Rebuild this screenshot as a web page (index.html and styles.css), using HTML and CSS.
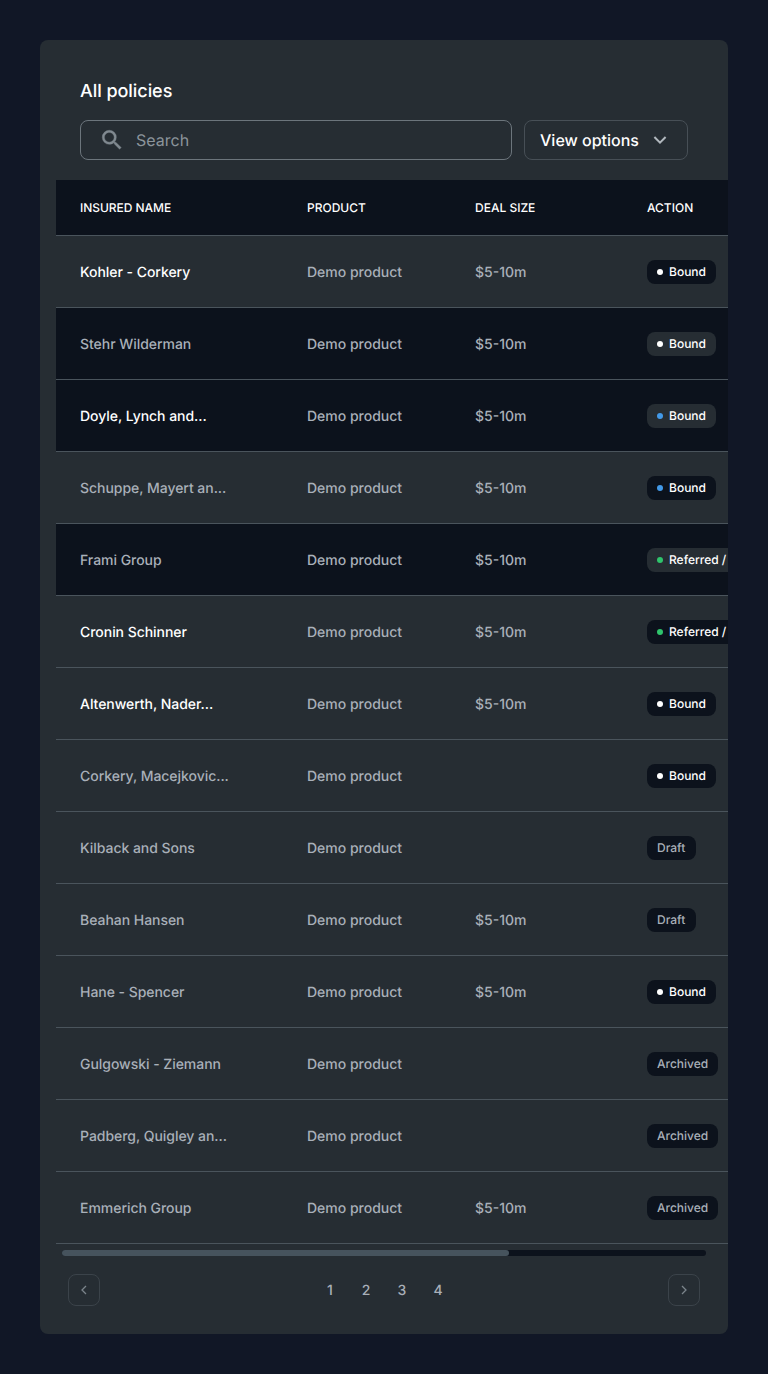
FILE: index.html
```
<!DOCTYPE html>
<html lang="en">
<head>
<meta charset="utf-8">
<title>All policies</title>
<link rel="stylesheet" href="styles.css">
</head>
<body>
<main class="card">
  <h1 class="title">All policies</h1>
  <div class="toolbar">
    <label class="search">
      <svg class="search-icon" width="26" height="26" viewBox="0 0 24 24" fill="currentColor" stroke="currentColor" stroke-width=".35"><path d="M15.5 14h-.79l-.28-.27A6.47 6.47 0 0 0 16 9.5 6.5 6.5 0 1 0 9.5 16c1.61 0 3.09-.59 4.23-1.57l.27.28v.79l5 4.99L20.49 19l-4.99-5zm-6 0C7.01 14 5 11.99 5 9.5S7.01 5 9.5 5 14 7.01 14 9.5 11.99 14 9.5 14z"/></svg>
      <span>Search</span>
    </label>
    <button class="options"><span>View options</span>
      <svg width="14" height="10" viewBox="0 0 14 10" fill="none" stroke="currentColor" stroke-width="2"><path d="M1.4 2 7 7.6 12.6 2"/></svg>
    </button>
  </div>
  <div class="table">
    <div class="row head"><span>INSURED NAME</span><span>PRODUCT</span><span>DEAL SIZE</span><span>ACTION</span></div>
    <div class="row unread"><span>Kohler - Corkery</span><span>Demo product</span><span>$5-10m</span><span class="pill">Bound</span></div>
    <div class="row dark"><span>Stehr Wilderman</span><span>Demo product</span><span>$5-10m</span><span class="pill">Bound</span></div>
    <div class="row dark unread"><span>Doyle, Lynch and...</span><span>Demo product</span><span>$5-10m</span><span class="pill blue">Bound</span></div>
    <div class="row"><span>Schuppe, Mayert an...</span><span>Demo product</span><span>$5-10m</span><span class="pill blue">Bound</span></div>
    <div class="row dark"><span>Frami Group</span><span>Demo product</span><span>$5-10m</span><span class="pill green">Referred /</span></div>
    <div class="row unread"><span>Cronin Schinner</span><span>Demo product</span><span>$5-10m</span><span class="pill green">Referred /</span></div>
    <div class="row unread"><span>Altenwerth, Nader...</span><span>Demo product</span><span>$5-10m</span><span class="pill">Bound</span></div>
    <div class="row"><span>Corkery, Macejkovic...</span><span>Demo product</span><span></span><span class="pill">Bound</span></div>
    <div class="row"><span>Kilback and Sons</span><span>Demo product</span><span></span><span class="pill muted">Draft</span></div>
    <div class="row"><span>Beahan Hansen</span><span>Demo product</span><span>$5-10m</span><span class="pill muted">Draft</span></div>
    <div class="row"><span>Hane - Spencer</span><span>Demo product</span><span>$5-10m</span><span class="pill">Bound</span></div>
    <div class="row"><span>Gulgowski - Ziemann</span><span>Demo product</span><span></span><span class="pill muted">Archived</span></div>
    <div class="row"><span>Padberg, Quigley an...</span><span>Demo product</span><span></span><span class="pill muted">Archived</span></div>
    <div class="row"><span>Emmerich Group</span><span>Demo product</span><span>$5-10m</span><span class="pill muted">Archived</span></div>
  </div>
  <div class="scrollbar"><div class="thumb"></div></div>
  <nav class="pager">
    <button class="step" aria-label="Previous"><svg width="8" height="12" viewBox="0 0 8 12" fill="none" stroke="currentColor" stroke-width="1.3"><path d="M6 2 2 6l4 4"/></svg></button>
    <div class="pages"><span>1</span><span>2</span><span>3</span><span>4</span></div>
    <button class="step" aria-label="Next"><svg width="8" height="12" viewBox="0 0 8 12" fill="none" stroke="currentColor" stroke-width="1.3"><path d="m2 2 4 4-4 4"/></svg></button>
  </nav>
</main>
</body>
</html>
```
FILE: styles.css
```
* { box-sizing: border-box; }
body {
  margin: 0;
  padding: 40px;
  background: #111726;
  font-family: Inter, sans-serif;
  text-rendering: geometricPrecision;
  color: #fff;
}
.card {
  height: 1294px;
  padding: 40px 0 0 16px;
  border-radius: 8px;
  background: #262d33;
  overflow: hidden;
}
.title {
  margin: 0 0 16px 24px;
  font-size: 18px;
  line-height: 24px;
  font-weight: 500;
  letter-spacing: -0.05px;
}
.toolbar {
  display: flex;
  gap: 12px;
  height: 40px;
  margin: 0 40px 20px 24px;
}
.search {
  flex: 1;
  display: flex;
  align-items: center;
  gap: 11px;
  padding-left: 18px;
  border: 1px solid #6c757c;
  border-radius: 8px;
  font-size: 16px;
  color: #8b949b;
}
.search-icon { color: #808990; }
.options {
  display: flex;
  align-items: center;
  justify-content: space-between;
  width: 164px;
  padding: 0 20px 0 15px;
  border: 1px solid #474f56;
  border-radius: 8px;
  background: none;
  font: 500 16px/20px Inter, sans-serif;
  text-rendering: inherit;
  color: #fff;
}
.options svg { color: #b0b7bd; }
.row {
  display: grid;
  grid-template-columns: 227px 168px 172px 81px;
  align-items: center;
  height: 72px;
  padding-left: 24px;
  border-bottom: 1px solid #4a545c;
  font-size: 14px;
  line-height: 18px;
  font-weight: 500;
  white-space: nowrap;
  color: #a9b0b9;
}
.row:not(.head) > span:not(.pill) { padding-top: 2px; }
.row > span:first-child { letter-spacing: -0.04px; }
.dark, .head { background: #0c121c; }
.head {
  height: 56px;
  font-size: 12px;
  line-height: 15px;
  color: #fff;
}
.unread span:first-child { color: #fff; }
.pill {
  display: flex;
  align-items: center;
  justify-self: start;
  min-width: 49px;
  height: 24px;
  padding: 0 10px;
  border-radius: 8px;
  background: #0c121c;
  font-size: 12px;
  line-height: 15px;
  color: #fff;
}
.pill::before {
  content: "";
  width: 6px;
  height: 6px;
  margin-right: 6px;
  border-radius: 50%;
  background: #fff;
}
.dark .pill { background: #262d33; }
.pill.blue::before { background: #4299e8; }
.green { width: 100px; }
.pill.green::before { background: #2fc46c; }
.muted { color: #a9b0b9; }
.pill.muted::before { display: none; }
.scrollbar {
  height: 6px;
  margin: 6px 22px 18px 6px;
  border-radius: 3px;
  background: #0c121c;
}
.thumb {
  width: 447px;
  height: 6px;
  border-radius: 3px;
  background: #46535d;
}
.pager {
  display: flex;
  align-items: center;
  justify-content: space-between;
  margin: 0 28px 0 12px;
}
.step {
  display: flex;
  align-items: center;
  justify-content: center;
  width: 32px;
  height: 32px;
  padding: 0;
  border: 1px solid #3b434a;
  border-radius: 8px;
  background: none;
  color: #7b848b;
}
.pages {
  display: flex;
  padding-top: 2px;
  font-size: 14px;
  line-height: 18px;
  font-weight: 500;
  color: #a9b0b9;
}
.pages span { width: 36px; text-align: center; }
```
